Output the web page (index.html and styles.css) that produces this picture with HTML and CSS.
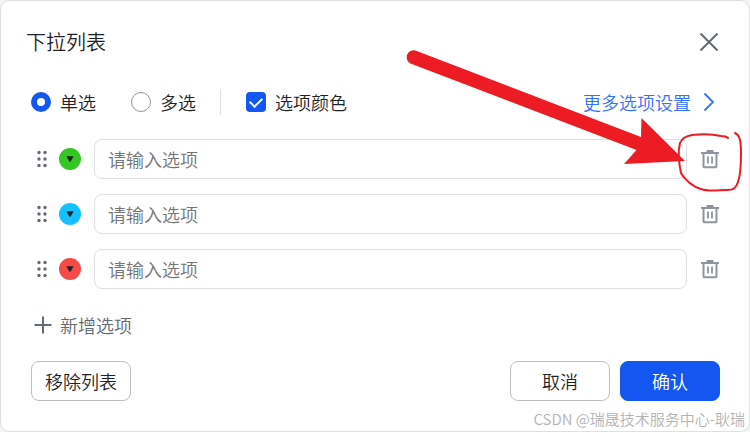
FILE: index.html
```html
<!DOCTYPE html>
<html lang="zh-CN">
<head>
<meta charset="utf-8">
<title>下拉列表</title>
<link rel="stylesheet" href="styles.css">
</head>
<body>
<svg class="sprite" aria-hidden="true">
  <symbol id="trash" viewBox="0 0 20 20">
    <path d="M1 4H19M6.500 2H13.500M3.500 4V17.500Q3.500 18.200 4.200 18.200H15.800Q16.500 18.200 16.500 17.500V4" fill="none" stroke="currentColor" stroke-width="2"/>
    <path d="M8 7.500V14.500M12 7.500V14.500" fill="none" stroke="currentColor" stroke-width="1.800"/>
  </symbol>
  <symbol id="grip" viewBox="0 0 12 18">
    <g fill="currentColor"><circle cx="3" cy="2.500" r="1.700"/><circle cx="9" cy="2.500" r="1.700"/><circle cx="3" cy="9" r="1.700"/><circle cx="9" cy="9" r="1.700"/><circle cx="3" cy="15.500" r="1.700"/><circle cx="9" cy="15.500" r="1.700"/></g>
  </symbol>
  <symbol id="caret" viewBox="0 0 8 6">
    <path d="M.8 .5H7.200L4.500 5.300Q4 5.900 3.500 5.300Z" fill="currentColor" stroke="currentColor" stroke-width=".5" stroke-linejoin="round"/>
  </symbol>
</svg>
<main class="dialog">
  <header class="header">
    <h1 class="title">下拉列表</h1>
    <button class="icon-button close" type="button" aria-label="关闭">
      <svg width="20" height="20" viewBox="0 0 20 20"><path d="M1.500 1.500L18.500 18.500M18.500 1.500L1.500 18.500" stroke="currentColor" stroke-width="2"/></svg>
    </button>
  </header>

  <div class="settings">
    <div class="modes">
      <label class="choice"><input class="radio" type="radio" name="mode" checked>单选</label>
      <label class="choice"><input class="radio" type="radio" name="mode">多选</label>
    </div>
    <label class="choice colors"><input class="checkbox" type="checkbox" checked>选项颜色</label>
    <a class="more" href="#">更多选项设置
      <svg width="12" height="20" viewBox="0 0 12 20"><path d="M1.500 1.500L10 10L1.500 18.500" fill="none" stroke="currentColor" stroke-width="1.800"/></svg>
    </a>
  </div>

  <ul class="options">
    <li class="option">
      <svg class="grip" width="12" height="18"><use href="#grip"/></svg>
      <button class="swatch green" type="button" aria-label="颜色"><svg width="8" height="6"><use href="#caret"/></svg></button>
      <input class="field" type="text" placeholder="请输入选项" aria-label="选项 1">
      <button class="icon-button trash" type="button" aria-label="删除"><svg width="20" height="20"><use href="#trash"/></svg></button>
    </li>
    <li class="option">
      <svg class="grip" width="12" height="18"><use href="#grip"/></svg>
      <button class="swatch blue" type="button" aria-label="颜色"><svg width="8" height="6"><use href="#caret"/></svg></button>
      <input class="field" type="text" placeholder="请输入选项" aria-label="选项 2">
      <button class="icon-button trash" type="button" aria-label="删除"><svg width="20" height="20"><use href="#trash"/></svg></button>
    </li>
    <li class="option">
      <svg class="grip" width="12" height="18"><use href="#grip"/></svg>
      <button class="swatch red" type="button" aria-label="颜色"><svg width="8" height="6"><use href="#caret"/></svg></button>
      <input class="field" type="text" placeholder="请输入选项" aria-label="选项 3">
      <button class="icon-button trash" type="button" aria-label="删除"><svg width="20" height="20"><use href="#trash"/></svg></button>
    </li>
  </ul>

  <button class="add" type="button">
    <svg width="18" height="18" viewBox="0 0 18 18"><path d="M9 .5V17.500M.5 9H17.500" stroke="currentColor" stroke-width="2"/></svg>新增选项
  </button>

  <footer class="footer">
    <button class="button remove" type="button">移除列表</button>
    <button class="button" type="button">取消</button>
    <button class="button primary" type="button">确认</button>
  </footer>

  <svg class="annotation" width="350" height="150" viewBox="400 45 350 150" aria-hidden="true">
    <path d="M415.500 50.500L641 137L641.500 118L685 161L624 164L636.500 150L410.500 63.500A7 7 0 0 1 415.500 50.500Z" fill="#ed1c24"/>
    <path d="M728 138C726 136 724 136 721 136C712 134 701 134 692 135C686 136 682 138 680 143C678 151 679 164 681 173C684 179 693 187 701 189C709 192 719 190 727 190C734 190 736 188 738 182C741 174 741 162 741 153C741 146 741 141 739 137C738 135 737 134 735 133" fill="none" stroke="#ed1c24" stroke-width="2" stroke-linecap="round"/>
  </svg>
  <div class="watermark">CSDN @瑞晟技术服务中心-耿瑞</div>
</main>
</body>
</html>
```

FILE: styles.css
```css
* {
  box-sizing: border-box;
}

body {
  margin: 0;
  background: #f2f3f5;
  color: #1f2329;
  font: 350 18px/26px "Noto Sans CJK SC", sans-serif;
}

button,
input {
  margin: 0;
  font: inherit;
  color: inherit;
}

button {
  padding: 0;
  border: 0;
  background: none;
}

svg {
  display: block;
  flex: none;
}

.sprite {
  position: absolute;
  width: 0;
  height: 0;
}

.dialog {
  position: relative;
  min-height: 100vh;
  padding: 26px 29px 29px 30px;
  border: 1px solid #dee0e3;
  border-radius: 10px;
  background: #fff;
}

.header {
  display: flex;
  align-items: center;
  justify-content: space-between;
  margin-left: -5px;
  padding-right: 1px;
}

.title {
  margin: 0;
  font-size: 20px;
  font-weight: 350;
  line-height: 30px;
}

.icon-button {
  display: flex;
  color: #646a73;
}

.settings {
  display: flex;
  align-items: center;
  margin-top: 32px;
}

.modes {
  display: flex;
  gap: 35px;
  padding-right: 24px;
  border-right: 1px solid #dee0e3;
}

.choice {
  display: flex;
  align-items: center;
  gap: 9px;
}

.colors {
  margin-left: 25px;
}

.radio,
.checkbox {
  display: grid;
  place-items: center;
  width: 20px;
  height: 20px;
  appearance: none;
}

.radio {
  border: 1px solid #8f959e;
  border-radius: 50%;
}

.radio:checked {
  border: 6px solid #1456f0;
}

.checkbox {
  border-radius: 4px;
  background: #1456f0;
}

.checkbox:checked::before {
  content: "";
  width: 10px;
  height: 6px;
  border: solid #fff;
  border-width: 0 0 2px 2px;
  transform: translateY(-1px) rotate(-45deg);
}

.more {
  display: flex;
  align-items: center;
  gap: 12px;
  margin-left: auto;
  padding-right: 5px;
  color: #3370ff;
  text-decoration: none;
}

.options {
  display: grid;
  gap: 15px;
  margin: 24px 0 0;
  padding: 0;
  list-style: none;
}

.option {
  display: flex;
  align-items: center;
}

.grip {
  margin-left: 5px;
  color: #646a73;
}

.swatch {
  display: grid;
  place-items: center;
  width: 22px;
  height: 22px;
  margin: 0 13px 0 11px;
  border-radius: 50%;
}

.green {
  background: #34c724;
}

.blue {
  background: #14c0ff;
}

.red {
  background: #f54a45;
}

.field {
  flex: 1;
  min-width: 0;
  height: 40px;
  padding: 0 13px;
  border: 1px solid #dee0e3;
  border-radius: 8px;
  background: #fff;
}

.field::placeholder {
  color: #757575;
}

.trash {
  margin-left: 13px;
  color: #8f959e;
}

.add {
  display: flex;
  align-items: center;
  gap: 8px;
  margin: 23px 0 0 3px;
  color: #646a73;
}

.footer {
  display: flex;
  gap: 10px;
  margin-top: 23px;
}

.button {
  width: 100px;
  height: 40px;
  border: 1px solid #bbbfc4;
  border-radius: 8px;
}

.remove {
  margin-right: auto;
}

.primary {
  border-color: #1456f0;
  background: #1456f0;
  color: #fff;
}

.annotation {
  position: absolute;
  top: 44px;
  right: -1px;
  pointer-events: none;
}

.watermark {
  position: absolute;
  right: 4px;
  bottom: 1px;
  color: #b4b4b4;
  font-size: 15px;
  line-height: 22px;
}
```
